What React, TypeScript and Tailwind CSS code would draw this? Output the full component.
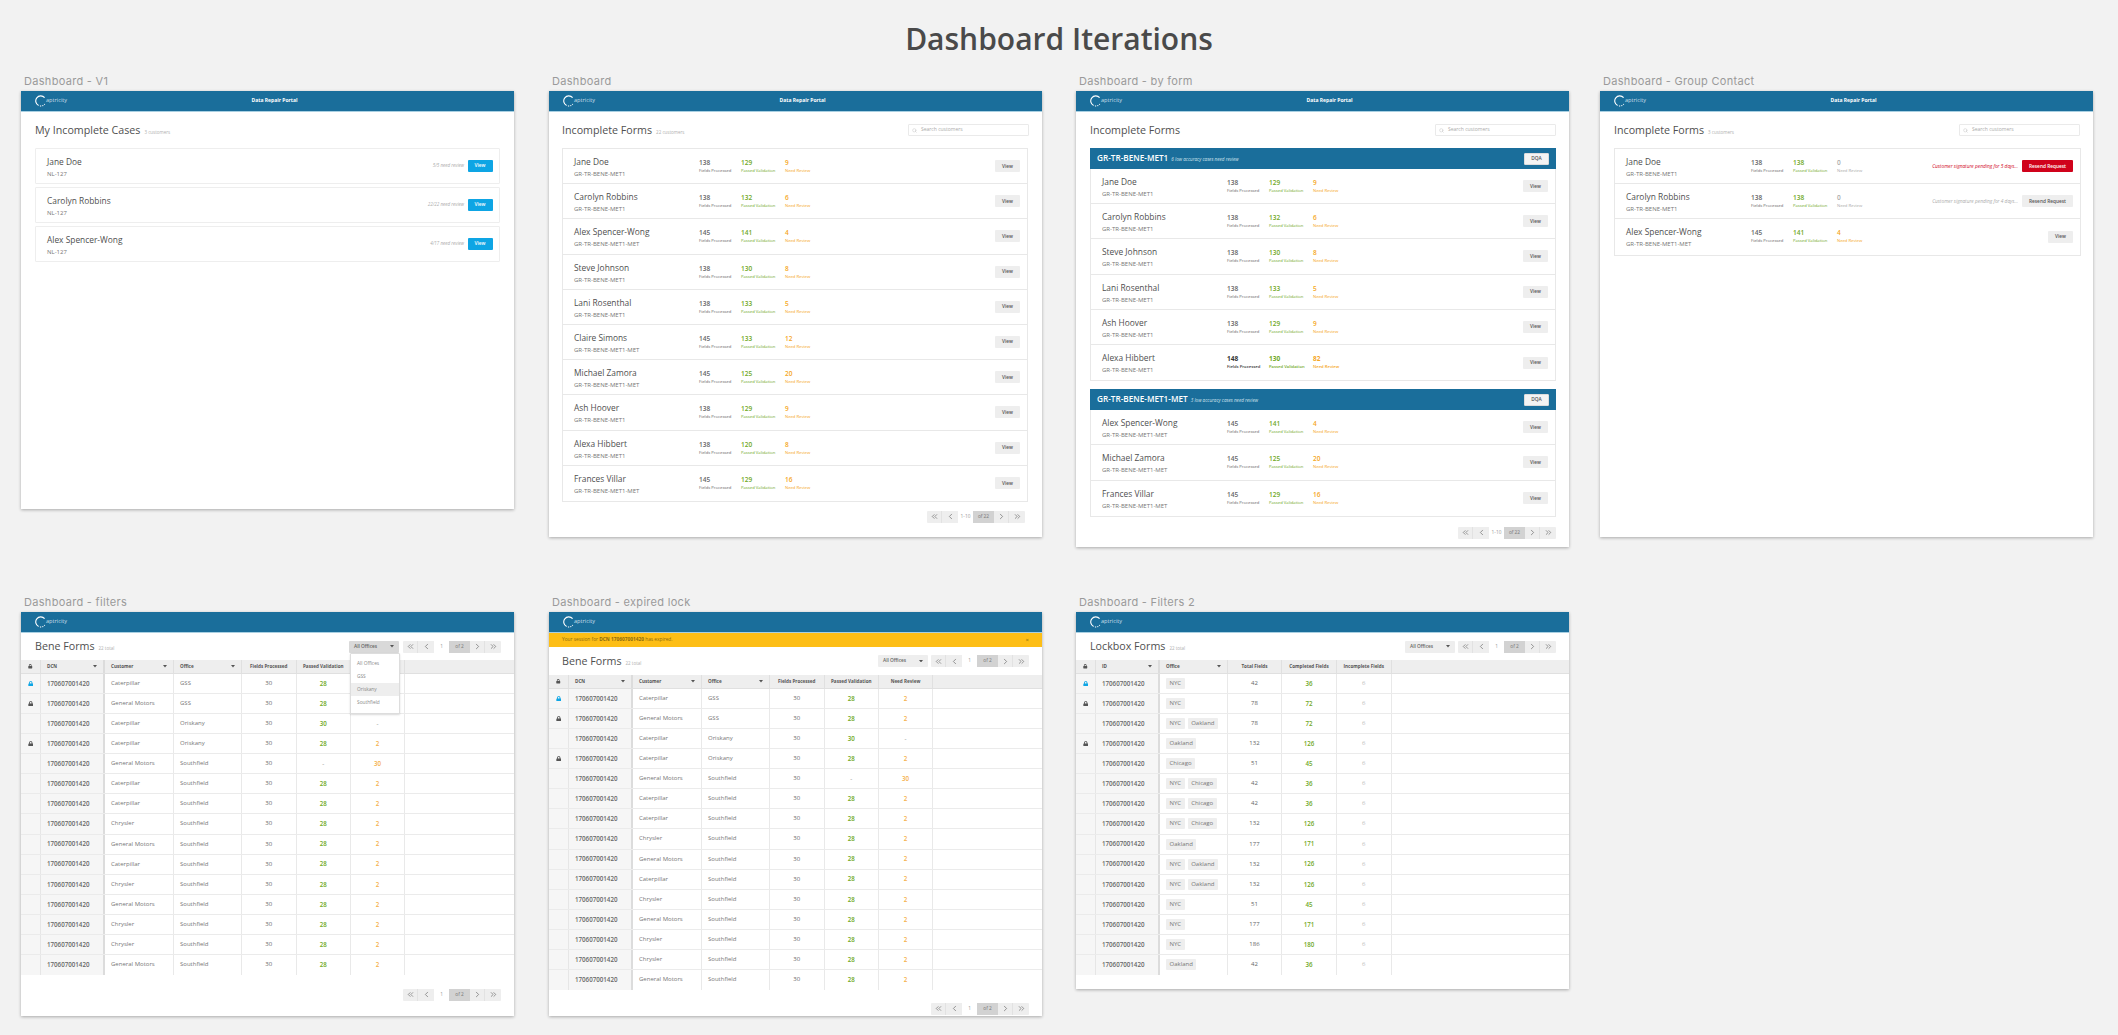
import { ReactNode } from "react";
import { FaLock } from "react-icons/fa";
import { ChevronLeft, ChevronRight, ChevronsLeft, ChevronsRight, Search } from "lucide-react";

const MET = "GR-TR-BENE-MET1";
const MM = "GR-TR-BENE-MET1-MET";

function Logo() {
  return (
    <div className="flex items-center">
      <svg width="12" height="12" viewBox="0 0 12 12" fill="none" stroke="#fff" strokeWidth="1.1">
        <path d="M9.6 2.7A5 5 0 1 0 3.6 10.4" />
        <path d="M4.9 11h1.3M7.3 10.8l1-.4M9.2 9.7l.6-.7" />
      </svg>
      <span className="ml-[-1px] mt-[-1px] text-[5.6px] leading-none text-[#c9dfea]">aptricity</span>
    </div>
  );
}

function Header({ title }: { title?: boolean }) {
  return (
    <div className="grid h-[21px] grid-cols-[1fr_auto_1fr] items-center border-b border-[#a9d0e2] bg-[#1a6e9b] pl-[14px]">
      <Logo />
      {title && <span className="text-[5px] font-bold text-white">Data Repair Portal</span>}
    </div>
  );
}

function Artboard({ label, className, children }: { label: string; className: string; children: ReactNode }) {
  return (
    <div className="w-[493px] shrink-0">
      <div className="flex h-[14px] items-center pb-[6px] pl-[3px] [font-family:Inter,sans-serif] text-[11px] tracking-[0.3px] whitespace-nowrap text-[#9a9a9a]">{label}</div>
      <div className={`relative bg-white shadow-[0_1px_3px_rgba(0,0,0,0.3)] ${className}`}>{children}</div>
    </div>
  );
}

function Title({ text, sub }: { text: string; sub?: string }) {
  return (
    <div className="flex items-baseline gap-[4px]">
      <span className="text-[10.7px] font-medium text-[#4f4f4f]">{text}</span>
      {sub && <span className="text-[4.5px] text-[#b0b0b0]">{sub}</span>}
    </div>
  );
}

function SearchBox() {
  return (
    <div className="flex h-[12px] w-[121px] items-center gap-[4px] rounded-[1px] border border-[#eaeaea] pl-[3px] text-[5px] text-[#aaa]">
      <Search size={5} strokeWidth={1.5} />
      Search customers
    </div>
  );
}

function Btn({ children, className = "bg-[#eee] text-[#555]" }: { children: ReactNode; className?: string }) {
  return (
    <div className={`flex h-[12px] items-center justify-center rounded-[1px] text-[4.8px] font-semibold ${className}`}>{children}</div>
  );
}

function Stat({ value, label, color, width, bold }: { value: string; label: string; color: string; width: string; bold?: boolean }) {
  return (
    <div className={`flex shrink-0 flex-col self-start pt-[9px] ${width} ${color}`}>
      <span className={`text-[6.5px] leading-[10px] ${bold ? "font-bold" : "font-semibold"}`}>{value}</span>
      <span className={`text-[4.2px] leading-[6px] whitespace-nowrap ${bold ? "font-semibold" : ""}`}>{label}</span>
    </div>
  );
}

type FormRow = { name: string; form: string; total: string; ok: string; need: string; bold?: boolean };

function Person({ name, form }: { name: string; form: string }) {
  return (
    <div className="flex w-[136px] shrink-0 flex-col self-start pl-[11px] pt-[7px]">
      <span className="text-[8.4px] leading-[11px] font-medium text-[#4f4f4f]">{name}</span>
      <span className="text-[6px] leading-[14px] text-[#777]">{form}</span>
    </div>
  );
}

function FormListRow({ row, needColor = "text-[#f5a623]", children }: { row: FormRow; needColor?: string; children?: ReactNode }) {
  return (
    <div className="flex h-[35.2px] items-center border-b border-[#e8e8e8] pr-[7px] last:border-b-0">
      <Person name={row.name} form={row.form} />
      <Stat value={row.total} label="Fields Processed" color={row.bold ? "text-[#333]" : "text-[#666]"} width="w-[42px]" bold={row.bold} />
      <Stat value={row.ok} label="Passed Validation" color="text-[#6fa81e]" width="w-[44px]" bold={row.bold} />
      <Stat value={row.need} label="Need Review" color={needColor} width="w-[40px]" bold={row.bold} />
      <div className="ml-auto flex items-center gap-[4px]">{children ?? <Btn className="w-[25px] bg-[#eee] text-[#555]">View</Btn>}</div>
    </div>
  );
}

function Pager({ range, total }: { range: string; total: string }) {
  const seg = "flex h-full items-center justify-center";
  return (
    <div className="flex h-[12px] w-[98px] overflow-hidden rounded-[1px] bg-[#eee] text-[4.8px] text-[#777]">
      <div className={`${seg} w-[15px] border-r border-[#e2e2e2]`}><ChevronsLeft size={9} strokeWidth={2} /></div>
      <div className={`${seg} w-[16px]`}><ChevronLeft size={9} strokeWidth={2} /></div>
      <div className={`${seg} w-[15px] bg-white text-[#999]`}>{range}</div>
      <div className={`${seg} w-[21px] bg-[#d2d2d2]`}>{total}</div>
      <div className={`${seg} w-[15px] border-r border-[#e2e2e2]`}><ChevronRight size={9} strokeWidth={2} /></div>
      <div className={`${seg} w-[16px]`}><ChevronsRight size={9} strokeWidth={2} /></div>
    </div>
  );
}

function Caret() {
  return (
    <svg width="4" height="2.5" viewBox="0 0 4 2.5" className="ml-auto" fill="#555">
      <path d="M0 0h4L2 2.5z" />
    </svg>
  );
}

function Filter({ className = "bg-[#eee]" }: { className?: string }) {
  return (
    <div className={`flex h-[12px] w-[50px] items-center rounded-[1px] px-[5px] text-[4.8px] font-semibold text-[#666] ${className}`}>
      All Offices
      <Caret />
    </div>
  );
}

const incomplete: FormRow[] = [
  { name: "Jane Doe", form: MET, total: "138", ok: "129", need: "9" },
  { name: "Carolyn Robbins", form: MET, total: "138", ok: "132", need: "6" },
  { name: "Alex Spencer-Wong", form: MM, total: "145", ok: "141", need: "4" },
  { name: "Steve Johnson", form: MET, total: "138", ok: "130", need: "8" },
  { name: "Lani Rosenthal", form: MET, total: "138", ok: "133", need: "5" },
  { name: "Claire Simons", form: MM, total: "145", ok: "133", need: "12" },
  { name: "Michael Zamora", form: MM, total: "145", ok: "125", need: "20" },
  { name: "Ash Hoover", form: MET, total: "138", ok: "129", need: "9" },
  { name: "Alexa Hibbert", form: MET, total: "138", ok: "120", need: "8" },
  { name: "Frances Villar", form: MM, total: "145", ok: "129", need: "16" },
];

const groupOne: FormRow[] = [
  { name: "Jane Doe", form: MET, total: "138", ok: "129", need: "9" },
  { name: "Carolyn Robbins", form: MET, total: "138", ok: "132", need: "6" },
  { name: "Steve Johnson", form: MET, total: "138", ok: "130", need: "8" },
  { name: "Lani Rosenthal", form: MET, total: "138", ok: "133", need: "5" },
  { name: "Ash Hoover", form: MET, total: "138", ok: "129", need: "9" },
  { name: "Alexa Hibbert", form: MET, total: "148", ok: "130", need: "82", bold: true },
];

const groupTwo: FormRow[] = [
  { name: "Alex Spencer-Wong", form: MM, total: "145", ok: "141", need: "4" },
  { name: "Michael Zamora", form: MM, total: "145", ok: "125", need: "20" },
  { name: "Frances Villar", form: MM, total: "145", ok: "129", need: "16" },
];

function Band({ form, note }: { form: string; note: string }) {
  return (
    <div className="flex h-[21px] items-center bg-[#1a6e9b] pl-[7px] pr-[7px]">
      <span className="text-[8.2px] font-semibold text-white">{form}</span>
      <span className="ml-[3px] mt-[1px] text-[4.6px] italic text-[#cfe2ec]">{note}</span>
      <Btn className="ml-auto w-[25px] border border-[#ddd] bg-[#f4f4f4] text-[#555]">DQA</Btn>
    </div>
  );
}

function V1Card({ name, need }: { name: string; need: string }) {
  return (
    <div className="flex h-[35.5px] items-center rounded-[1px] border border-[#eee] pr-[6.5px]">
      <Person name={name} form="NL-127" />
      <span className="ml-auto mr-[3.5px] text-[4.5px] italic text-[#aaa]">{need} need review</span>
      <Btn className="w-[25px] bg-[#0ea5e4] text-white">View</Btn>
    </div>
  );
}

type Lock = "blue" | "dark" | undefined;

function LockCell({ lock }: { lock: Lock }) {
  return (
    <div className="flex items-center justify-center border-r border-[#e6e6e6] bg-[#f6f6f6]">
      {lock && <FaLock size={5.5} className={lock === "blue" ? "text-[#0ea5e4]" : "text-[#555]"} />}
    </div>
  );
}

function Head({ children, sort, className = "justify-center" }: { children?: ReactNode; sort?: boolean; className?: string }) {
  return (
    <div className={`flex items-center border-r border-[#e0e0e0] px-[6px] text-[4.6px] font-bold text-[#555] ${className}`}>
      {children}
      {sort && <Caret />}
    </div>
  );
}

const cell = "flex items-center border-r border-[#e9e9e9]";
const idCell = `${cell} border-r-2 border-r-[#dcdcdc] bg-[#f6f6f6] pl-[6px] text-[6.2px] font-semibold text-[#666]`;
const textCell = `${cell} pl-[6px] text-[6px] text-[#777]`;

const beneRows: { lock?: Lock; customer: string; office: string; ok: string; need: string }[] = [
  { lock: "blue", customer: "Caterpillar", office: "GSS", ok: "28", need: "2" },
  { lock: "dark", customer: "General Motors", office: "GSS", ok: "28", need: "2" },
  { customer: "Caterpillar", office: "Oriskany", ok: "30", need: "-" },
  { lock: "dark", customer: "Caterpillar", office: "Oriskany", ok: "28", need: "2" },
  { customer: "General Motors", office: "Southfield", ok: "-", need: "30" },
  { customer: "Caterpillar", office: "Southfield", ok: "28", need: "2" },
  { customer: "Caterpillar", office: "Southfield", ok: "28", need: "2" },
  { customer: "Chrysler", office: "Southfield", ok: "28", need: "2" },
  { customer: "General Motors", office: "Southfield", ok: "28", need: "2" },
  { customer: "Caterpillar", office: "Southfield", ok: "28", need: "2" },
  { customer: "Chrysler", office: "Southfield", ok: "28", need: "2" },
  { customer: "General Motors", office: "Southfield", ok: "28", need: "2" },
  { customer: "Chrysler", office: "Southfield", ok: "28", need: "2" },
  { customer: "Chrysler", office: "Southfield", ok: "28", need: "2" },
  { customer: "General Motors", office: "Southfield", ok: "28", need: "2" },
];

function BeneTable({ hideNeedHead }: { hideNeedHead?: boolean }) {
  const cols = "grid grid-cols-[20px_64px_69px_68px_54.5px_54.5px_54px_1fr]";
  return (
    <div>
      <div className={`${cols} h-[14px] border-b border-[#e0e0e0] bg-[#eee]`}>
        <div className="flex items-center justify-center border-r border-[#e0e0e0]"><FaLock size={4.5} className="text-[#555]" /></div>
        <Head sort className="border-r-2 border-r-[#dcdcdc]">DCN</Head>
        <Head sort>Customer</Head>
        <Head sort>Office</Head>
        <Head>Fields Processed</Head>
        <Head>Passed Validation</Head>
        <Head>{hideNeedHead ? "" : "Need Review"}</Head>
        <div />
      </div>
      {beneRows.map((r, i) => (
        <div key={i} className={`${cols} h-[20.07px] border-b border-[#ebebeb] last:border-b-0`}>
          <LockCell lock={r.lock} />
          <div className={idCell}>170607001420</div>
          <div className={textCell}>{r.customer}</div>
          <div className={textCell}>{r.office}</div>
          <div className={`${cell} justify-center text-[6px] text-[#666]`}>30</div>
          <div className={`${cell} justify-center text-[6.2px] font-semibold ${r.ok === "-" ? "text-[#bbb]" : "text-[#6fa81e]"}`}>{r.ok}</div>
          <div className={`${cell} justify-center text-[6.2px] font-semibold ${r.need === "-" ? "text-[#bbb]" : "text-[#f5b04a]"}`}>{r.need}</div>
          <div />
        </div>
      ))}
    </div>
  );
}

const lockboxRows: { lock?: Lock; tags: string[]; total: string; done: string }[] = [
  { lock: "blue", tags: ["NYC"], total: "42", done: "36" },
  { lock: "dark", tags: ["NYC"], total: "78", done: "72" },
  { tags: ["NYC", "Oakland"], total: "78", done: "72" },
  { lock: "dark", tags: ["Oakland"], total: "132", done: "126" },
  { tags: ["Chicago"], total: "51", done: "45" },
  { tags: ["NYC", "Chicago"], total: "42", done: "36" },
  { tags: ["NYC", "Chicago"], total: "42", done: "36" },
  { tags: ["NYC", "Chicago"], total: "132", done: "126" },
  { tags: ["Oakland"], total: "177", done: "171" },
  { tags: ["NYC", "Oakland"], total: "132", done: "126" },
  { tags: ["NYC", "Oakland"], total: "132", done: "126" },
  { tags: ["NYC"], total: "51", done: "45" },
  { tags: ["NYC"], total: "177", done: "171" },
  { tags: ["NYC"], total: "186", done: "180" },
  { tags: ["Oakland"], total: "42", done: "36" },
];

function LockboxTable() {
  const cols = "grid grid-cols-[20px_64px_68px_54px_55px_54.5px_1fr]";
  return (
    <div>
      <div className={`${cols} h-[14px] border-b border-[#e0e0e0] bg-[#eee]`}>
        <div className="flex items-center justify-center border-r border-[#e0e0e0]"><FaLock size={4.5} className="text-[#555]" /></div>
        <Head sort className="border-r-2 border-r-[#dcdcdc]">ID</Head>
        <Head sort>Office</Head>
        <Head>Total Fields</Head>
        <Head>Completed Fields</Head>
        <Head>Incomplete Fields</Head>
        <div />
      </div>
      {lockboxRows.map((r, i) => (
        <div key={i} className={`${cols} h-[20.07px] border-b border-[#ebebeb] last:border-b-0`}>
          <LockCell lock={r.lock} />
          <div className={idCell}>170607001420</div>
          <div className={`${cell} gap-[3px] pl-[6px]`}>
            {r.tags.map((t) => (
              <span key={t} className="flex h-[11px] items-center rounded-[1px] bg-[#eee] px-[3.5px] text-[6px] text-[#777]">{t}</span>
            ))}
          </div>
          <div className={`${cell} justify-center text-[6px] text-[#666]`}>{r.total}</div>
          <div className={`${cell} justify-center text-[6.2px] font-semibold text-[#6fa81e]`}>{r.done}</div>
          <div className={`${cell} justify-center text-[6px] text-[#bbb]`}>6</div>
          <div />
        </div>
      ))}
    </div>
  );
}

function OfficeMenu() {
  const item = "flex h-[13.2px] items-center pl-[6px]";
  return (
    <div className="absolute left-[329px] top-[40.5px] z-10 flex h-[61px] w-[50px] flex-col justify-center rounded-[1px] border border-[#ddd] bg-white text-[4.8px] text-[#888] shadow-[0_1px_2px_rgba(0,0,0,0.15)]">
      <div className={item}>All Offices</div>
      <div className={item}>GSS</div>
      <div className={`${item} bg-[#eee]`}>Oriskany</div>
      <div className={item}>Southfield</div>
    </div>
  );
}

export default function App() {
  return (
    <div className="h-[1035px] w-[2118px] overflow-hidden bg-[#f2f2f2] [font-family:'Open_Sans',sans-serif]">
      <h1 className="flex h-[77px] items-center justify-center text-[30px] font-semibold text-[#4a4a4a]">Dashboard Iterations</h1>

      <div className="flex h-[470px] items-start pl-[21px]">
        <Artboard label="Dashboard - V1" className="h-[418px]">
          <Header title />
          <div className="flex h-[36px] items-center pl-[14px]">
            <Title text="My Incomplete Cases" sub="3 customers" />
          </div>
          <div className="mx-[14px] flex flex-col gap-[3.5px]">
            <V1Card name="Jane Doe" need="5/5" />
            <V1Card name="Carolyn Robbins" need="22/22" />
            <V1Card name="Alex Spencer-Wong" need="4/17" />
          </div>
        </Artboard>

        <div className="ml-[35px]">
          <Artboard label="Dashboard" className="h-[446px]">
            <Header title />
            <div className="flex h-[36px] items-center justify-between pl-[13px] pr-[13px]">
              <Title text="Incomplete Forms" sub="22 customers" />
              <SearchBox />
            </div>
            <div className="mx-[13px] w-[466px] border border-[#e8e8e8]">
              {incomplete.map((r) => <FormListRow key={r.name} row={r} />)}
            </div>
            <div className="mr-[17px] mt-[9px] flex justify-end"><Pager range="1-10" total="of 22" /></div>
          </Artboard>
        </div>

        <div className="ml-[34px]">
          <Artboard label="Dashboard - by form" className="h-[456px]">
            <Header title />
            <div className="flex h-[36px] items-center justify-between pl-[14px] pr-[13px]">
              <Title text="Incomplete Forms" />
              <SearchBox />
            </div>
            <div className="mx-[14px] w-[466px]">
              <Band form="GR-TR-BENE-MET1" note="6 low accuracy cases need review" />
              <div className="border-x border-b border-[#e8e8e8]">
                {groupOne.map((r) => <FormListRow key={r.name} row={r} />)}
              </div>
              <div className="mt-[8px]">
                <Band form="GR-TR-BENE-MET1-MET" note="3 low accuracy cases need review" />
              </div>
              <div className="border-x border-b border-[#e8e8e8]">
                {groupTwo.map((r) => <FormListRow key={r.name} row={r} />)}
              </div>
            </div>
            <div className="mr-[13px] mt-[10px] flex justify-end"><Pager range="1-10" total="of 22" /></div>
          </Artboard>
        </div>

        <div className="ml-[31px]">
          <Artboard label="Dashboard - Group Contact" className="h-[446px]">
            <Header title />
            <div className="flex h-[36px] items-center justify-between pl-[14px] pr-[13px]">
              <Title text="Incomplete Forms" sub="3 customers" />
              <SearchBox />
            </div>
            <div className="mx-[14px] w-[467px] border border-[#e8e8e8]">
              <FormListRow row={{ name: "Jane Doe", form: MET, total: "138", ok: "138", need: "0" }} needColor="text-[#aaa]">
                <span className="text-[4.8px] italic text-[#d0021b]">Customer signature pending for 5 days...</span>
                <Btn className="w-[51px] bg-[#d0021b] text-white">Resend Request</Btn>
              </FormListRow>
              <FormListRow row={{ name: "Carolyn Robbins", form: MET, total: "138", ok: "138", need: "0" }} needColor="text-[#aaa]">
                <span className="text-[4.8px] italic text-[#aaa]">Customer signature pending for 4 days...</span>
                <Btn className="w-[51px] bg-[#eee] text-[#555]">Resend Request</Btn>
              </FormListRow>
              <FormListRow row={{ name: "Alex Spencer-Wong", form: MM, total: "145", ok: "141", need: "4" }} />
            </div>
          </Artboard>
        </div>
      </div>

      <div className="mt-[51px] flex items-start pl-[21px]">
        <Artboard label="Dashboard - filters" className="h-[404px]">
          <Header />
          <div className="flex h-[27px] items-center justify-between pl-[14px] pr-[13px]">
            <Title text="Bene Forms" sub="22 total" />
            <div className="flex items-center gap-[4px]">
              <Filter className="bg-[#d9d9d9]" />
              <Pager range="1" total="of 2" />
            </div>
          </div>
          <BeneTable hideNeedHead />
          <div className="mr-[13px] mt-[14px] flex justify-end"><Pager range="1" total="of 2" /></div>
          <OfficeMenu />
        </Artboard>

        <div className="ml-[35px]">
          <Artboard label="Dashboard - expired lock" className="h-[404px]">
            <Header />
            <div className="flex h-[14px] items-center justify-between bg-[#fdbe16] px-[13px] text-[4.8px] text-[#8a6a10]">
              <span>Your session for <b>DCN 170607001420</b> has expired.</span>
              <span className="text-[6px]">×</span>
            </div>
            <div className="flex h-[28px] items-center justify-between pl-[13px] pr-[13px]">
              <Title text="Bene Forms" sub="22 total" />
              <div className="flex items-center gap-[3px]">
                <Filter />
                <Pager range="1" total="of 2" />
              </div>
            </div>
            <BeneTable />
            <div className="mr-[13px] mt-[13px] flex justify-end"><Pager range="1" total="of 2" /></div>
          </Artboard>
        </div>

        <div className="ml-[34px]">
          <Artboard label="Dashboard - Filters 2" className="h-[377px]">
            <Header />
            <div className="flex h-[27px] items-center justify-between pl-[14px] pr-[13px]">
              <Title text="Lockbox Forms" sub="22 total" />
              <div className="flex items-center gap-[3px]">
                <Filter />
                <Pager range="1" total="of 2" />
              </div>
            </div>
            <LockboxTable />
          </Artboard>
        </div>
      </div>
    </div>
  );
}
